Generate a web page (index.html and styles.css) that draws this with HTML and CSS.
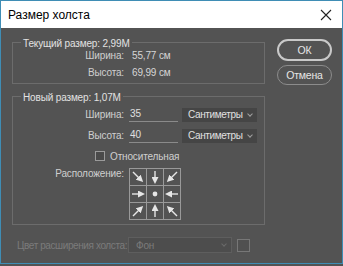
FILE: index.html
```html
<!DOCTYPE html>
<html lang="ru">
<head>
  <meta charset="UTF-8" />
  <meta name="viewport" content="width=device-width, initial-scale=1.0" />
  <title>Размер холста</title>
  <link rel="stylesheet" href="styles.css">
</head>
<body>
  <div class="window">
    <header class="titlebar">
      <span class="title">Размер холста</span>
      <svg class="close" width="12" height="12" viewBox="0 0 12 12">
        <path d="M1 1 L11 11 M11 1 L1 11" stroke="#222" stroke-width="1.1" fill="none" />
      </svg>
    </header>

    <div class="content">
      <div class="main">
        <fieldset class="group">
          <legend>Текущий размер: 2,99M</legend>
          <div class="row info">
            <span class="label">Ширина:</span>
            <span class="value">55,77 см</span>
          </div>
          <div class="row info">
            <span class="label">Высота:</span>
            <span class="value">69,99 см</span>
          </div>
        </fieldset>

        <fieldset class="group new">
          <legend>Новый размер: 1,07M</legend>
          <div class="row field">
            <span class="label">Ширина:</span>
            <span class="input">35</span>
            <span class="dropdown">Сантиметры <i class="chevron"></i></span>
          </div>
          <div class="row field">
            <span class="label">Высота:</span>
            <span class="input">40</span>
            <span class="dropdown">Сантиметры <i class="chevron"></i></span>
          </div>
          <div class="row check">
            <span class="box"></span>
            <span class="check-text">Относительная</span>
          </div>
          <div class="row anchor">
            <span class="label">Расположение:</span>
            <svg class="anchor-grid" width="52" height="52" viewBox="0 0 52 52">
              <defs>
                <marker id="head" markerUnits="userSpaceOnUse" markerWidth="7" markerHeight="7" refX="4" refY="3.5" orient="auto">
                  <path d="M0 0 L7 3.5 L0 7 z" fill="#e6e6e6" />
                </marker>
              </defs>
              <g stroke="#999" stroke-width="1" fill="none">
                <rect x="0.5" y="0.5" width="51" height="51" />
                <path d="M17.5 0 V52 M34.5 0 V52 M0 17.5 H52 M0 34.5 H52" />
              </g>
              <g stroke="#e6e6e6" stroke-width="1.4" marker-end="url(#head)">
                <path d="M4 4 L12 12" />
                <path d="M26 3 L26 13" />
                <path d="M48 4 L40 12" />
                <path d="M3 26 L13 26" />
                <path d="M49 26 L39 26" />
                <path d="M4 48 L12 40" />
                <path d="M26 49 L26 39" />
                <path d="M48 48 L40 40" />
              </g>
              <circle cx="26" cy="26" r="2.4" fill="#e6e6e6" />
            </svg>
          </div>
        </fieldset>

        <div class="row extension">
          <span class="ext-label">Цвет расширения холста:</span>
          <span class="ext-select">Фон <i class="chevron"></i></span>
          <span class="swatch"></span>
        </div>
      </div>

      <div class="buttons">
        <button class="btn primary">ОК</button>
        <button class="btn">Отмена</button>
      </div>
    </div>
  </div>
</body>
</html>
```

FILE: styles.css
```css
body { margin: 0; padding: 0; background: #535353; font-family: "Liberation Sans", Arial, sans-serif; font-size: 10px; letter-spacing: -0.15px; color: #cfcfcf; }
.window { width: 343px; height: 264px; box-sizing: border-box; border: 1px solid #3f8db5; background: #535353; overflow: hidden; }
.titlebar { height: 27px; background: #fff; display: flex; align-items: center; justify-content: space-between; padding: 0 10px 0 7px; font-size: 12px; letter-spacing: 0; color: #000; }
.close { display: block; }
.content { display: flex; gap: 12px; padding-left: 11px; }
.main { width: 253px; }
.buttons { display: flex; flex-direction: column; gap: 4px; padding-top: 11px; width: 55px; }
.btn { height: 22px; border-radius: 11px; background: transparent; border: 1px solid #8c8c8c; color: #e6e6e6; font-family: inherit; font-size: 10.5px; letter-spacing: -0.2px; padding: 0; }
.btn.primary { border: 2px solid #c9c9c9; }
.btn + .btn { height: 20px; border-radius: 10px; }

.group { margin: 6px 0 0; padding: 0 0 4px; border: 1px solid #6c6c6c; }
.group.new { margin-top: 4px; padding-bottom: 4px; }
.group legend { margin-left: 8px; padding: 4px 2px 0; line-height: 12px; color: #e2e2e2; }

.row { display: flex; align-items: center; justify-content: flex-start; }
.label { width: 111px; text-align: right; flex: none; }
.info { height: 12px; line-height: 12px; }
.info + .info { margin-top: 5px; }
.info .value { margin-left: 8px; color: #d6d6d6; }

.field { height: 15px; margin-top: 3px; }
.field + .field { margin-top: 6px; }
.input { width: 49px; margin-left: 5px; box-sizing: border-box; height: 15px; padding-left: 1px; border-bottom: 1px solid #8a8a8a; color: #e0e0e0; line-height: 14px; }
.dropdown { width: 75px; height: 14px; margin-left: 4px; box-sizing: border-box; background: #454545; padding: 0 0 0 6px; display: flex; align-items: center; justify-content: space-between; color: #e0e0e0; letter-spacing: -0.35px; white-space: nowrap; }
.chevron { width: 3px; height: 3px; border-right: 1px solid #a0a0a0; border-bottom: 1px solid #a0a0a0; transform: rotate(45deg); margin: 0 5px 2px 0; flex: none; }

.check { height: 12px; margin-top: 7px; }
.box { width: 8px; height: 8px; margin-left: 82px; border: 1px solid #9a9a9a; background: #4a4a4a; flex: none; }
.check-text { margin-left: 5px; }

.anchor { align-items: flex-start; margin-top: 6px; }
.anchor .label { line-height: 12px; }
.anchor-grid { display: block; margin: 0 0 0 5px; }

.extension { margin-top: 12px; height: 16px; color: #7b7b7b; }
.ext-label { width: 112px; padding-left: 5px; box-sizing: border-box; flex: none; white-space: nowrap; letter-spacing: -0.4px; }
.ext-select { width: 104px; height: 16px; margin-left: 4px; box-sizing: border-box; background: #4d4d4d; border: 1px solid #5e5e5e; padding-left: 7px; display: flex; align-items: center; justify-content: space-between; color: #7b7b7b; }
.ext-select .chevron { border-color: #6a6a6a; }
.swatch { width: 11px; height: 11px; margin-left: 5px; border: 1px solid #777; background: #505050; }
```
